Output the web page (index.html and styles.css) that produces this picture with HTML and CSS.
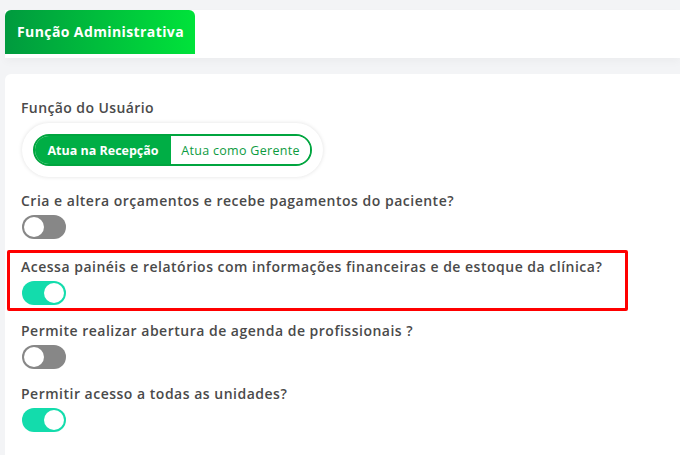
FILE: index.html
```html
<!DOCTYPE html>
<html lang="pt-BR">
<head>
    <meta charset="UTF-8">
    <meta name="viewport" content="width=device-width, initial-scale=1.0">
    <title>Função Administrativa</title>
    <link rel="stylesheet" href="styles.css">
</head>
<body>
    <div class="tabs">
        <div class="tab active">Função Administrativa</div>
    </div>

    <div class="card">
        <div class="field-label">Função do Usuário</div>
        <div class="segment-wrap">
            <div class="segment">
                <button class="seg selected">Atua na Recepção</button>
                <button class="seg">Atua como Gerente</button>
            </div>
        </div>

        <div class="item">
            <div class="question">Cria e altera orçamentos e recebe pagamentos do paciente?</div>
            <span class="toggle"></span>
        </div>

        <div class="item highlight">
            <div class="question">Acessa painéis e relatórios com informações financeiras e de estoque da clínica?</div>
            <span class="toggle on"></span>
        </div>

        <div class="item after-highlight">
            <div class="question">Permite realizar abertura de agenda de profissionais ?</div>
            <span class="toggle"></span>
        </div>

        <div class="item">
            <div class="question">Permitir acesso a todas as unidades?</div>
            <span class="toggle on"></span>
        </div>
    </div>
</body>
</html>
```

FILE: styles.css
```css
body {
    margin: 0;
    background-color: #f3f4f6;
    font-family: "Open Sans", "DejaVu Sans", sans-serif;
    color: #4a4a4a;
    overflow: hidden;
}
.tabs {
    margin: 10px 0 0 5px;
    height: 48px;
    background: white;
    box-shadow: 0 4px 8px rgba(0,0,0,0.03);
}
.tab {
    width: 190px;
    height: 44px;
    box-sizing: border-box;
    padding-left: 12px;
    line-height: 44px;
    border-radius: 6px 6px 0 0;
    background: linear-gradient(90deg, #009a3e, #00e33a);
    color: white;
    font-weight: 700;
    font-size: 14px;
    letter-spacing: 0.4px;
}
.card {
    margin: 16px 0 0 5px;
    background: white;
    border-radius: 6px 0 0 0;
    padding: 24px 0 0 16px;
    height: calc(100vh - 74px);
    box-sizing: border-box;
}
.field-label {
    font-size: 14px;
    font-weight: 600;
    line-height: 20px;
    letter-spacing: 0.4px;
}
.segment-wrap {
    display: inline-block;
    margin: 5px 0 0 1px;
    padding: 11px;
    border-radius: 28px;
    background: white;
    box-shadow: 0 0 4px rgba(0,0,0,0.12);
}
.segment {
    display: flex;
    border: 2px solid #00a53f;
    border-radius: 16px;
    overflow: hidden;
    height: 28px;
}
.seg {
    border: none;
    background: white;
    color: #0d9b3f;
    font-family: inherit;
    font-size: 12.5px;
    letter-spacing: 0.3px;
    padding: 0 10px;
    width: 139px;
    cursor: pointer;
}
.seg.selected {
    background: #00ae45;
    color: white;
    font-weight: 700;
    letter-spacing: 0;
    width: 136px;
}
.item {
    margin-top: 15px;
}
.item:first-of-type,
.segment-wrap + .item {
    margin-top: 14px;
}
.question {
    font-size: 14px;
    font-weight: 600;
    line-height: 20px;
    letter-spacing: 0.5px;
}
.toggle {
    display: block;
    position: relative;
    margin: 4px 0 0 1px;
    width: 44px;
    height: 24px;
    border-radius: 12px;
    background: #878787;
}
.toggle::after {
    content: "";
    position: absolute;
    top: 2px;
    left: 2px;
    width: 20px;
    height: 20px;
    border-radius: 50%;
    background: white;
}
.toggle.on {
    background: #13dcac;
}
.toggle.on::after {
    left: 22px;
}
.item.highlight {
    margin: 11px 0 0 -14px;
    width: 621px;
    box-sizing: border-box;
    border: 3px solid #ff0000;
    border-radius: 2px;
    padding: 4px 0 3px 11px;
}
.item.after-highlight {
    margin-top: 10px;
}
```
